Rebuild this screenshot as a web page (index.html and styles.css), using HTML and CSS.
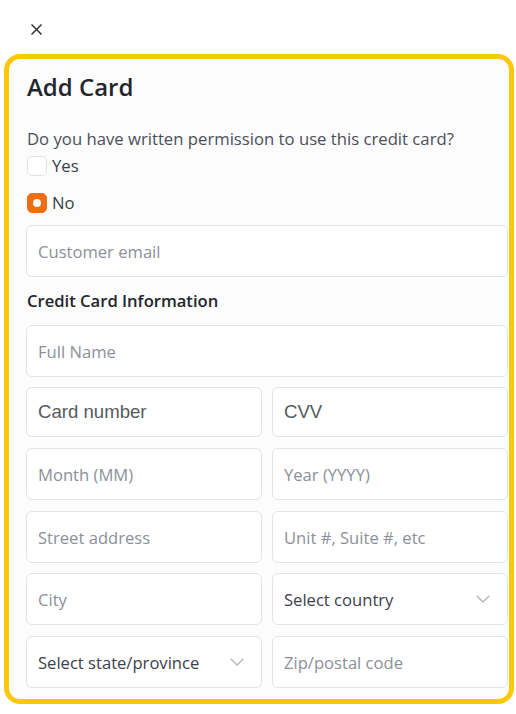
FILE: index.html
```html
<!DOCTYPE html>
<html lang="en">
<head>
<meta charset="utf-8">
<title>Add Card</title>
<link rel="stylesheet" href="styles.css">
</head>
<body>
<div class="topbar">
  <button class="close" aria-label="Close">
    <svg width="11" height="11" viewBox="0 0 11 11"><path d="M0.5 0.5L10.5 10.5M10.5 0.5L0.5 10.5" stroke="#333" stroke-width="1.5" fill="none"/></svg>
  </button>
</div>
<div class="card">
  <h1 class="title">Add Card</h1>
  <p class="question">Do you have written permission to use this credit card?</p>
  <label class="choice choice-yes"><span class="box"></span><span>Yes</span></label>
  <label class="choice choice-no"><span class="box box-on"><span class="dot"></span></span><span>No</span></label>
  <input class="field field-email" type="text" placeholder="Customer email">
  <h2 class="heading">Credit Card Information</h2>
  <input class="field field-name" type="text" placeholder="Full Name">
  <div class="row row-card">
    <div class="frame">Card number</div>
    <div class="frame">CVV</div>
  </div>
  <div class="row">
    <input class="field" type="text" placeholder="Month (MM)">
    <input class="field" type="text" placeholder="Year (YYYY)">
  </div>
  <div class="row row-tight">
    <input class="field" type="text" placeholder="Street address">
    <input class="field" type="text" placeholder="Unit #, Suite #, etc">
  </div>
  <div class="row">
    <input class="field" type="text" placeholder="City">
    <div class="select">Select country<svg class="chev" width="14" height="8" viewBox="0 0 14 8"><path d="M0.7 0.7L7 7L13.3 0.7" stroke="#b4b6ba" stroke-width="1.4" fill="none"/></svg></div>
  </div>
  <div class="row row-last">
    <div class="select">Select state/province<svg class="chev" width="14" height="8" viewBox="0 0 14 8"><path d="M0.7 0.7L7 7L13.3 0.7" stroke="#b4b6ba" stroke-width="1.4" fill="none"/></svg></div>
    <input class="field" type="text" placeholder="Zip/postal code">
  </div>
</div>
</body>
</html>
```
FILE: styles.css
```css
* { box-sizing: border-box; }
html, body { margin: 0; padding: 0; background: #ffffff; }
body {
  font-family: "Open Sans", "Noto Sans", sans-serif;
  color: #2b2f38;
  width: 516px;
}
.topbar {
  height: 54px;
  padding: 24px 0 0 31px;
}
.close {
  display: block;
  width: 11px;
  height: 11px;
  padding: 0;
  border: 0;
  background: none;
  line-height: 0;
}
.card {
  margin: 0 2px 0 4px;
  border: 5px solid #fdc70c;
  border-radius: 16px;
  background: #fcfcfc;
  padding: 12px 1px 11px 17px;
}
.title {
  margin: 0 0 0 1px;
  font-size: 24px;
  line-height: 32px;
  font-weight: 600;
  color: #23262d;
}
.question {
  margin: 24px 0 0 1px;
  font-size: 16.7px;
  line-height: 24px;
  color: #4a4f5a;
}
.choice {
  display: flex;
  align-items: center;
  gap: 5px;
  height: 20px;
  margin-left: 1px;
  font-size: 16.7px;
  line-height: 20px;
  color: #3a3f4a;
}
.choice-yes { margin-top: 5px; }
.choice-no { margin-top: 17px; }
.box {
  width: 20px;
  height: 20px;
  border: 1px solid #e0e0e0;
  border-radius: 5px;
  background: #fff;
  display: flex;
  align-items: center;
  justify-content: center;
}
.box-on {
  background: #f06d12;
  border-color: #f06d12;
}
.dot {
  width: 8px;
  height: 8px;
  border-radius: 50%;
  background: #fff;
}
.field, .frame, .select {
  display: flex;
  align-items: center;
  width: 100%;
  height: 52px;
  padding: 0 11px;
  border: 1px solid #e4e4e4;
  border-radius: 6px;
  background: #ffffff;
  font-family: "Open Sans", "Noto Sans", sans-serif;
  font-size: 16.6px;
  color: #3b404c;
  outline: none;
}
.field::placeholder { color: #8b909a; opacity: 1; }
.field-email { margin-top: 12px; }
.heading {
  margin: 12px 0 0 1px;
  font-size: 16.6px;
  line-height: 24px;
  font-weight: 600;
  color: #23262d;
}
.field-name { margin-top: 12px; margin-bottom: 10px; }
.row {
  display: grid;
  grid-template-columns: 1fr 1fr;
  gap: 10px;
  margin-bottom: 11px;
}
.row-tight { margin-bottom: 10px; }
.row-last { margin-bottom: 0; }
.row-card .frame {
  height: 50px;
  font-family: "Liberation Sans", Arial, sans-serif;
  font-size: 18.6px;
  color: #555a60;
}
.select {
  justify-content: space-between;
  padding-right: 17px;
}
.chev { flex: none; }
```
